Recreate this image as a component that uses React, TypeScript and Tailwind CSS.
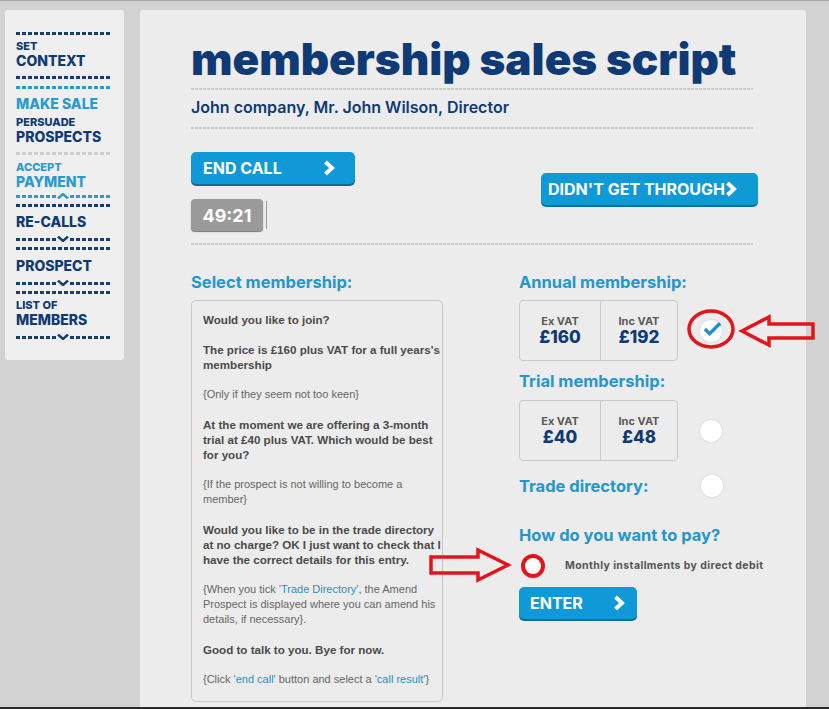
import React from 'react';

const NAVY = 'text-[#0f3a75]';
const HEAD = "font-['Inter',sans-serif]";

const Dash = ({ color = 'navy' }: { color?: 'navy' | 'blue' | 'gray' }) => {
  const bg =
    color === 'navy'
      ? 'bg-[image:repeating-linear-gradient(90deg,#163d74_0_4px,transparent_4px_6px)]'
      : color === 'blue'
        ? 'bg-[image:repeating-linear-gradient(90deg,#2a9ad3_0_4px,transparent_4px_6px)]'
        : 'bg-[image:repeating-linear-gradient(90deg,#cfcfcf_0_4px,transparent_4px_6px)]';
  return <div className={`h-[3px] w-[95px] ${bg}`} />;
};

const CaretDash = ({ up = false, blue = false }: { up?: boolean; blue?: boolean }) => {
  const bg = blue
    ? 'bg-[image:repeating-linear-gradient(90deg,#2a9ad3_0_4px,transparent_4px_6px)]'
    : 'bg-[image:repeating-linear-gradient(90deg,#163d74_0_4px,transparent_4px_6px)]';
  const stroke = blue ? '#2a9ad3' : '#163d74';
  return (
    <div className="flex items-center w-[95px] h-[6px]">
      <div className={`h-[3px] w-[40px] ${bg}`} />
      <svg width="12" height="6" viewBox="0 0 12 6" className="mx-[1px]">
        {up ? (
          <polyline points="1,5.5 6,1 11,5.5" fill="none" stroke={stroke} strokeWidth="2.4" />
        ) : (
          <polyline points="1,0.5 6,5 11,0.5" fill="none" stroke={stroke} strokeWidth="2.4" />
        )}
      </svg>
      <div className={`h-[3px] w-[41px] ${bg}`} />
    </div>
  );
};

const GrayDash = ({ w = 'w-[562px]' }: { w?: string }) => (
  <div className={`h-[2px] ${w} bg-[image:repeating-linear-gradient(90deg,#c9c9c9_0_3px,transparent_3px_4px)]`} />
);

const Chevron = () => (
  <svg width="12" height="16" viewBox="0 0 12 16" className="shrink-0">
    <polyline points="2.5,2 9,8 2.5,14" fill="none" stroke="white" strokeWidth="4" strokeLinejoin="miter" />
  </svg>
);

const BlueButton = ({ label, className = '' }: { label: string; className?: string }) => (
  <div
    className={`flex items-center h-[32px] rounded-[5px] bg-[#0f9ad7] shadow-[0_2px_0_#0b6d9c] text-white font-bold text-[16px] ${HEAD} ${className}`}
  >
    <span>{label}</span>
    <Chevron />
  </div>
);

const PriceBox = ({ ex, inc }: { ex: string; inc: string }) => (
  <div className="flex w-[159px] h-[61px] border border-[#c9c9c9] rounded-[4px]">
    <div className="w-[81px] flex flex-col items-center justify-center border-r border-[#c9c9c9]">
      <span className={`text-[11px] font-bold text-[#5a5a5a] leading-[13px] ${HEAD}`}>Ex VAT</span>
      <span className={`text-[17px] font-extrabold leading-[18px] ${NAVY} ${HEAD}`}>{ex}</span>
    </div>
    <div className="flex-1 flex flex-col items-center justify-center">
      <span className={`text-[11px] font-bold text-[#5a5a5a] leading-[13px] ${HEAD}`}>Inc VAT</span>
      <span className={`text-[17px] font-extrabold leading-[18px] ${NAVY} ${HEAD}`}>{inc}</span>
    </div>
  </div>
);

const Radio = ({ checked = false }: { checked?: boolean }) => (
  <div className="w-[22px] h-[22px] rounded-full bg-white shadow-[0_0_2px_#c4c4c4] flex items-center justify-center">
    {checked && (
      <svg width="20" height="16" viewBox="0 0 20 16" className="ml-[3px] -mt-[4px]">
        <polyline points="2,8 7,13 18,2" fill="none" stroke="#1c8fd0" strokeWidth="3.5" />
      </svg>
    )}
  </div>
);

const Heading = ({ children, className = '' }: { children: React.ReactNode; className?: string }) => (
  <div className={`text-[16.5px] font-bold text-[#2496cf] leading-[20px] ${HEAD} ${className}`}>{children}</div>
);

const App = () => {
  const bold = 'font-bold text-[11.6px] text-[#4a4a4a]';
  const note = 'text-[11px] text-[#666]';
  const small = 'text-[11px] font-extrabold leading-[12px]';
  const big = 'text-[14px] font-extrabold leading-[17px]';
  return (
    <div className="relative w-[829px] h-[709px] overflow-hidden bg-[#d2d2d2] border-t border-[#a8a8a8] flex font-['Liberation_Sans',Arial,sans-serif]">
      {/* sidebar */}
      <div className={`ml-[5px] mt-[9px] w-[119px] h-[350px] bg-[#efefef] rounded-[3px] pl-[11px] pt-[22px] flex flex-col ${HEAD}`}>
        <Dash />
        <div className={`mt-[5px] ${small} ${NAVY}`}>SET</div>
        <div className={`${big} ${NAVY}`}>CONTEXT</div>
        <div className="mt-[7px]"><Dash /></div>
        <div className="mt-[7px]"><Dash color="blue" /></div>
        <div className={`mt-[6px] ${big} text-[#2a9ad3]`}>MAKE SALE</div>
        <div className={`mt-[4px] ${small} ${NAVY}`}>PERSUADE</div>
        <div className={`${big} ${NAVY}`}>PROSPECTS</div>
        <div className="mt-[7px]"><Dash color="gray" /></div>
        <div className={`mt-[6px] ${small} text-[#2a9ad3]`}>ACCEPT</div>
        <div className={`${big} text-[#2a9ad3]`}>PAYMENT</div>
        <div className="mt-[3px]"><CaretDash up blue /></div>
        <div className="mt-[5px]"><Dash /></div>
        <div className={`mt-[6px] ${big} ${NAVY}`}>RE-CALLS</div>
        <div className="mt-[6px]"><CaretDash /></div>
        <div className="mt-[5px]"><Dash /></div>
        <div className={`mt-[7px] ${big} ${NAVY}`}>PROSPECT</div>
        <div className="mt-[6px]"><CaretDash /></div>
        <div className="mt-[5px]"><Dash /></div>
        <div className={`mt-[5px] ${small} ${NAVY}`}>LIST OF</div>
        <div className={`${big} ${NAVY}`}>MEMBERS</div>
        <div className="mt-[6px]"><CaretDash /></div>
      </div>

      {/* main panel */}
      <div className="ml-[16px] mt-[9px] w-[666px] h-[720px] bg-[#ececec] rounded-[3px] pl-[51px] flex flex-col">
        <h1 className={`mt-[25px] text-[44px] font-black leading-[48px] ${NAVY} ${HEAD}`}>
          membership sales script
        </h1>
        <div className="mt-[5px]"><GrayDash /></div>
        <div className={`mt-[8px] text-[16px] font-semibold leading-[18px] ${NAVY} ${HEAD}`}>
          John company, Mr. John Wilson, Director
        </div>
        <div className="mt-[11px]"><GrayDash /></div>

        <div className="mt-[23px] flex items-start">
          <div className="flex flex-col">
            <BlueButton label="END CALL" className="w-[164px] pl-[12px] gap-[41px]" />
            <div className="mt-[15px] flex items-center">
              <div className={`w-[72px] h-[32px] rounded-[4px] bg-[#9a9a9a] shadow-[0_1px_1px_#777] flex items-center justify-center text-white font-bold text-[18px] ${HEAD}`}>
                49:21
              </div>
              <div className="ml-[3px] w-[1px] h-[28px] bg-[#9a9a9a]" />
            </div>
          </div>
          <BlueButton label="DIDN'T GET THROUGH" className="ml-[186px] mt-[21px] w-[217px] pl-[7px] gap-[0px]" />
        </div>

        <div className="mt-[12px]"><GrayDash /></div>

        <div className="mt-[27px] flex">
          {/* left column */}
          <div className="w-[252px] flex flex-col">
            <Heading>Select membership:</Heading>
            <div className="mt-[8px] w-[252px] h-[402px] border border-[#c6c6c6] rounded-[5px] pl-[11px] pt-[11px] leading-[15px] whitespace-nowrap">
              <p className={bold}>Would you like to join?</p>
              <p className={`${bold} mt-[15px]`}>The price is £160 plus VAT for a full years's<br />membership</p>
              <p className={`${note} mt-[15px]`}>{'{Only if they seem not too keen}'}</p>
              <p className={`${bold} mt-[15px]`}>At the moment we are offering a 3-month<br />trial at £40 plus VAT. Which would be best<br />for you?</p>
              <p className={`${note} mt-[15px]`}>{'{If the prospect is not willing to become a'}<br />{'member}'}</p>
              <p className={`${bold} mt-[15px]`}>Would you like to be in the trade directory<br />at no charge? OK I just want to check that I<br />have the correct details for this entry.</p>
              <p className={`${note} mt-[15px]`}>
                {'{When you tick '}<span className="text-[#2a8fc8]">'Trade Directory'</span>{', the Amend'}<br />
                Prospect is displayed where you can amend his<br />
                {'details, if necessary}.'}
              </p>
              <p className={`${bold} mt-[15px]`}>Good to talk to you. Bye for now.</p>
              <p className={`${note} mt-[15px]`}>
                {'{Click '}<span className="text-[#2a8fc8]">'end call'</span>{' button and select a '}<span className="text-[#2a8fc8]">'call result'</span>{'}'}
              </p>
            </div>
          </div>

          {/* right column */}
          <div className="ml-[76px] flex flex-col">
            <Heading>Annual membership:</Heading>
            <div className="mt-[8px] flex items-center">
              <PriceBox ex="£160" inc="£192" />
              <div className="ml-[22px]"><Radio checked /></div>
            </div>
            <Heading className="mt-[10px]">Trial membership:</Heading>
            <div className="mt-[9px] flex items-center">
              <PriceBox ex="£40" inc="£48" />
              <div className="ml-[22px]"><Radio /></div>
            </div>
            <div className="mt-[14px] flex items-center">
              <Heading className="w-[182px]">Trade directory:</Heading>
              <Radio />
            </div>
            <Heading className="mt-[28px]">How do you want to pay?</Heading>
            <div className="mt-[10px] flex items-center">
              <div className="ml-[3px]"><Radio /></div>
              <span className={`ml-[21px] text-[10.5px] font-bold text-[#555] tracking-[0.4px] ${HEAD}`}>
                Monthly installments by direct debit
              </span>
            </div>
            <BlueButton label="ENTER" className="mt-[10px] w-[118px] pl-[11px] gap-[30px]" />
          </div>
        </div>
      </div>

      {/* annotations */}
      <svg className="absolute left-[686px] top-[308px]" width="132" height="44" viewBox="0 0 132 44">
        <ellipse cx="25" cy="20" rx="22" ry="18" fill="none" stroke="#e3141b" strokeWidth="3.5" />
        <polygon points="56,22 83,8 83,15 127,15 127,29 83,29 83,36" fill="none" stroke="#e3141b" strokeWidth="3.5" strokeLinejoin="miter" />
      </svg>
      <svg className="absolute left-[428px] top-[545px]" width="122" height="40" viewBox="0 0 122 40">
        <polygon points="3,11 50,11 50,4 80,19 50,34 50,27 3,27" fill="none" stroke="#e3141b" strokeWidth="3.5" />
        <circle cx="105" cy="20" r="10" fill="white" stroke="#e3141b" strokeWidth="4" />
      </svg>

      <div className="absolute left-0 bottom-0 w-full h-[2px] bg-[#2a2a2a]" />
    </div>
  );
};

export default App;
